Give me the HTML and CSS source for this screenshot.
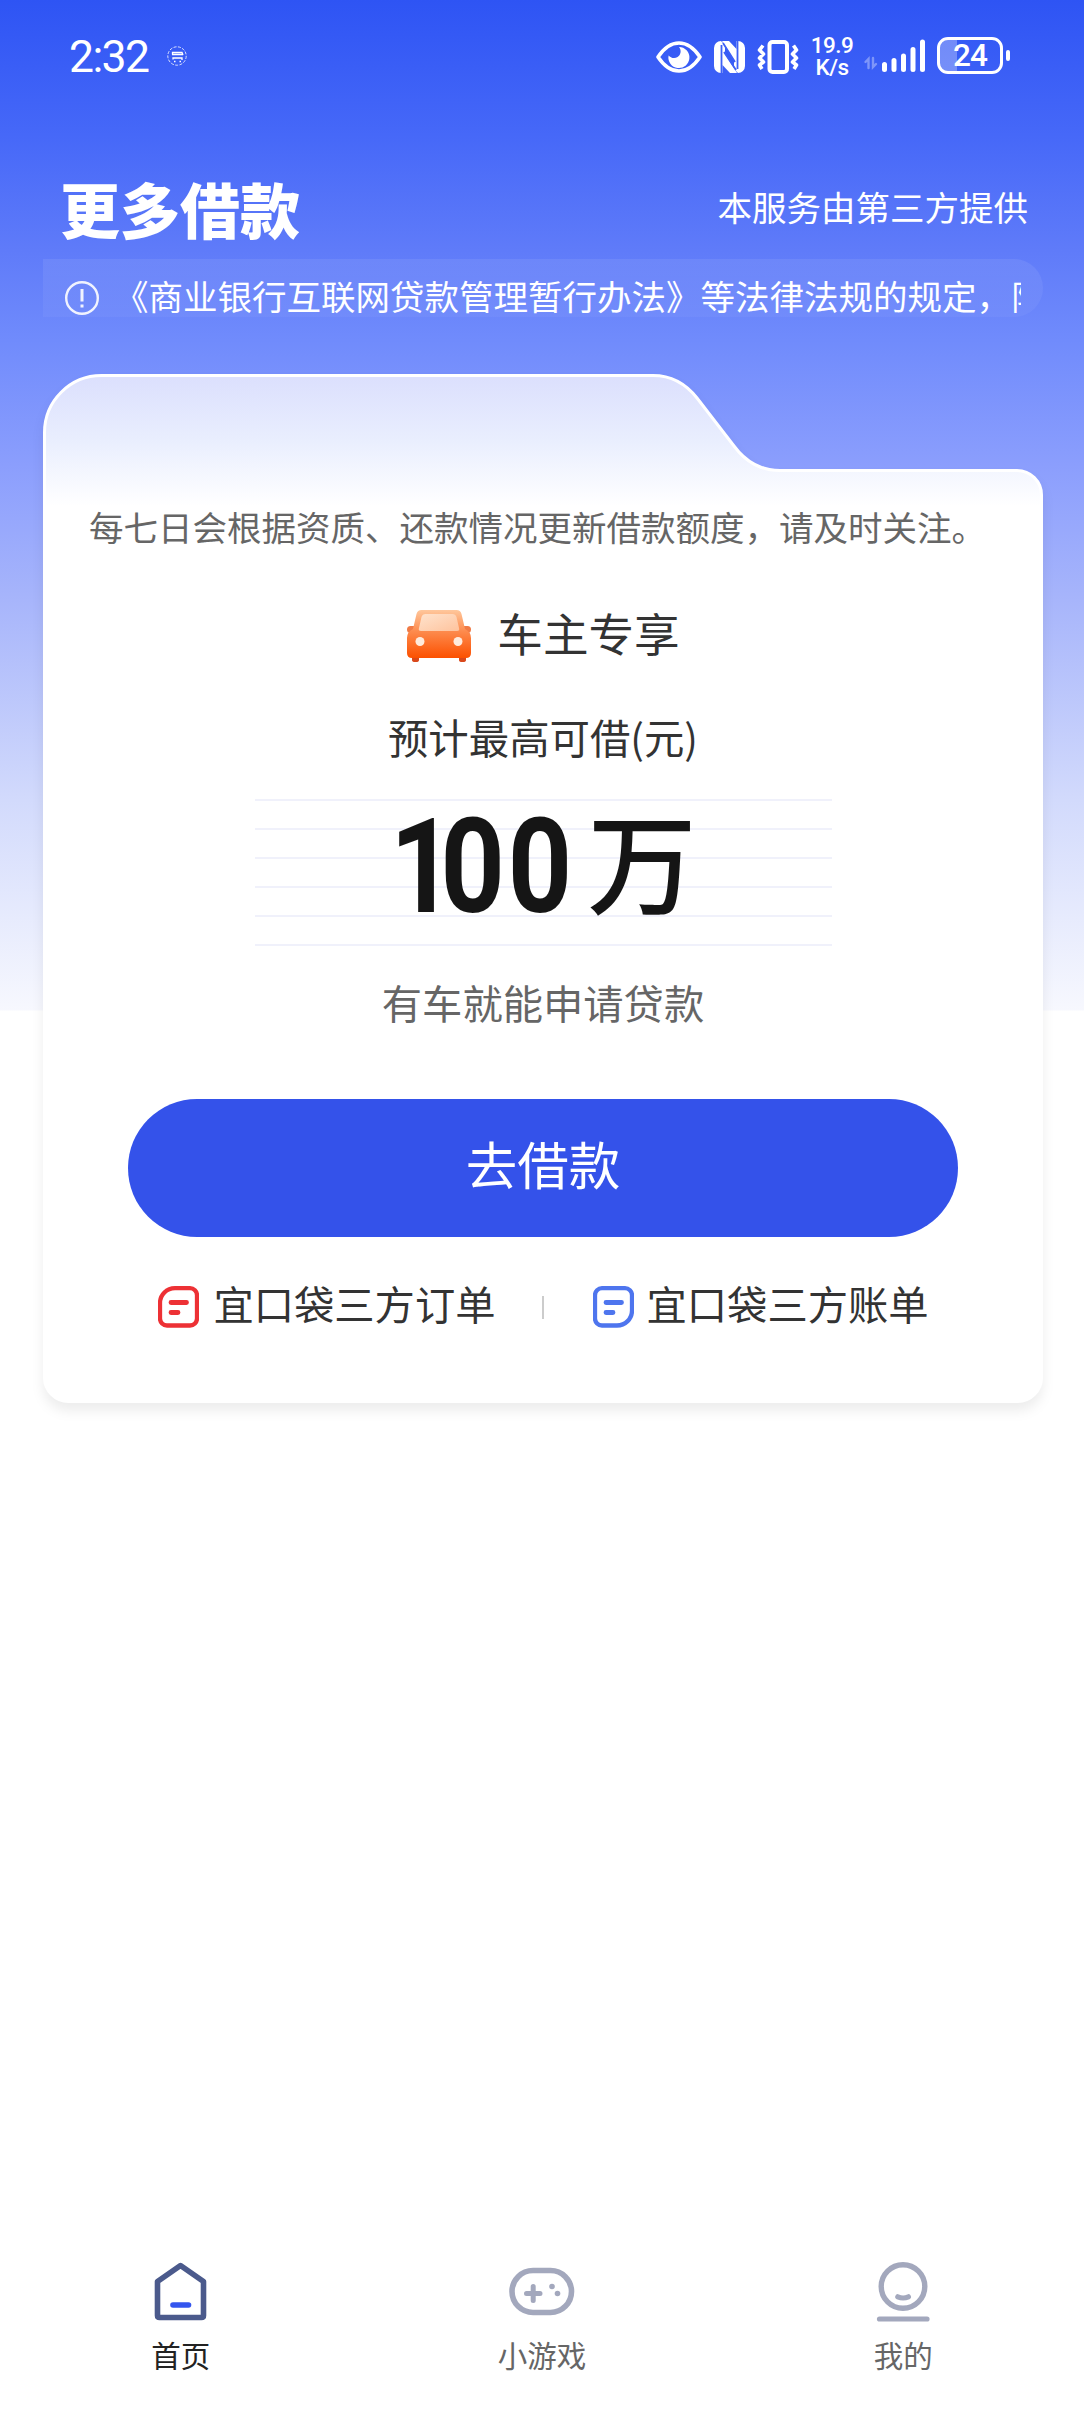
FILE: index.html
```html
<!DOCTYPE html>
<html lang="zh-CN">
<head>
<meta charset="utf-8">
<title>更多借款</title>
<link rel="stylesheet" href="styles.css">
</head>
<body>
<div class="page">
  <div class="status">
    <span class="time">2:32</span>
    <svg class="status-app" width="20" height="20" viewBox="0 0 20 20" fill="none" stroke="#fff">
      <circle cx="10" cy="10" r="9.2" stroke-width="1" stroke-dasharray="3 1.4" opacity=".8"/>
      <path d="M5.500 8.500V6.500h9.500l1 2.500M5 8.500h11M6 13.500v-1.500h9v2M7 15.500h1.500M12.500 15.500h1.500" stroke-width="1.300"/>
    </svg>
    <div class="status-right">
      <svg class="i-eye" width="46" height="32" viewBox="0 0 46 32">
        <path d="M2 16C8 7 15 2 23 2s15 5 21 14c-6 9-13 14-21 14S8 25 2 16Z" fill="none" stroke="#fff" stroke-width="3.600" stroke-linejoin="round"/>
        <path d="M23 6a10.500 10.500 0 1 1-10.400 8.500c2 2.500 6 3.500 9 1.500 3.500-2.300 4-7 1.400-10Z" fill="#fff"/>
      </svg>
      <svg class="i-nfc" width="31" height="32" viewBox="0 0 31 32" fill="#fff">
        <path d="M7 0 11 4V13L23 32H16L8.500 24V32H7a7 7 0 0 1-7-7V7A7 7 0 0 1 7 0Z"/>
        <path d="M24 32 20 28V19L8 0h7l7.500 8V0H24a7 7 0 0 1 7 7V25a7 7 0 0 1-7 7Z"/>
        <path d="M7.500 4v28M23.500 0v28M10 11l12 18M9 2l12 19" stroke="#3d60f6" stroke-width="1.800" fill="none"/>
      </svg>
      <svg class="i-vib" width="42" height="34" viewBox="0 0 42 34" fill="none" stroke="#fff">
        <rect x="12.500" y="2" width="17.500" height="30" rx="3" stroke-width="4"/>
        <path d="M6 5.500 2.500 10l4 4-4 4 4 4-4 3 2.500 4M36.500 5.500l3 4.500-4 4 4 4-4 4 4 3-2.500 4" stroke-width="3.600" stroke-linejoin="round"/>
      </svg>
      <div class="speed"><span>19.9</span><span>K/s</span></div>
      <svg class="i-signal" width="62" height="34" viewBox="0 0 62 34" fill="none" stroke="#fff" stroke-linecap="round">
        <path d="M5.500 29V20l-3 3M10 19v9l3-3" stroke-width="2.400" opacity=".35"/>
        <path d="M21.500 25.500v5M31 21.500v9M40.500 17v13.500M50 10.500v20M59.500 3v27.500" stroke-width="5"/>
      </svg>
      <div class="battery"><span>24</span></div>
      <i class="battery-nub"></i>
    </div>
  </div>

  <header class="head">
    <h1>更多借款</h1>
    <span class="provider">本服务由第三方提供</span>
  </header>

  <div class="notice">
    <svg width="36" height="36" viewBox="0 0 36 36" fill="none" stroke="#fff" opacity=".9">
      <circle cx="18" cy="18" r="15.800" stroke-width="2.400"/>
      <path d="M18 9v12.500M18 24.500v3" stroke-width="3"/>
    </svg>
    <p>《商业银行互联网贷款管理暂行办法》等法律法规的规定&#65292;限</p>
  </div>

  <main class="card">
    <svg class="card-shape" width="1000" height="1029" viewBox="0 0 1000 1029">
      <defs>
        <linearGradient id="tab" x1="0" y1="0" x2="0" y2="132" gradientUnits="userSpaceOnUse">
          <stop offset="0" stop-color="#dbdffd"/><stop offset=".5" stop-color="#e9eefe"/><stop offset="1" stop-color="#fff"/>
        </linearGradient>
      </defs>
      <path d="M1.500 58.500A57 57 0 0 1 58.500 1.500H610C629 1.500 643 10 654 24L691 72C702 87 718 96.500 737 96.500H974a24.500 24.500 0 0 1 24.500 24.500V1003.500a24 24 0 0 1-24 24H25.500a24 24 0 0 1-24-24Z" fill="url(#tab)" stroke="#fff" stroke-width="3"/>
    </svg>
    <p class="tip">每七日会根据资质、还款情况更新借款额度&#65292;请及时关注。</p>
    <div class="product">
      <svg width="66" height="54" viewBox="0 0 66 54">
        <defs>
          <linearGradient id="car" x1="0" y1="0" x2="0" y2="1"><stop offset="0" stop-color="#ffc79c"/><stop offset=".45" stop-color="#fd8a4c"/><stop offset="1" stop-color="#fc5000"/></linearGradient>
          <linearGradient id="glass" x1="0" y1="0" x2="1" y2="1"><stop offset="0" stop-color="#ffe3cd"/><stop offset="1" stop-color="#fec39d"/></linearGradient>
        </defs>
        <path d="M6 46h7v5q0 2-3 2H9q-3 0-3-2ZM53 46h7v5q0 2-3 2h-1q-3 0-3-2Z" fill="#d9481b"/>
        <rect x="1" y="17" width="10" height="7" rx="3.500" fill="#f07a45"/><rect x="55" y="17" width="10" height="7" rx="3.500" fill="#f07a45"/>
        <path d="M15.500 1h35q4 0 5 4l3.500 15q6 3 6 9v15q0 5-5 5H6q-5 0-5-5V29q0-6 6-9L10.500 5q1-4 5-4Z" fill="url(#car)"/>
        <path d="M19.500 5h27q3 0 4 3l2.500 11q1 3-2 3H15q-3 0-2-3l2.500-11q1-3 4-3Z" fill="url(#glass)"/>
        <circle cx="14" cy="32.500" r="4.500" fill="#ffebdc"/><circle cx="52" cy="32.500" r="4.500" fill="#ffebdc"/>
      </svg>
      <h2>车主专享</h2>
    </div>
    <p class="estimate">预计最高可借(元)</p>
    <div class="amount"><span class="num"><span class="one">1</span>00</span><span class="unit">万</span></div>
    <p class="desc">有车就能申请贷款</p>
    <button class="go" type="button">去借款</button>
    <div class="links">
      <a class="link"><svg width="41" height="42" viewBox="0 0 41 42" fill="none" stroke="#ed3135" stroke-linecap="round">
        <path d="M17 2.200H32a7 7 0 0 1 7 7V32.500a7 7 0 0 1-7 7H9a7 7 0 0 1-7-7V17.200a15 15 0 0 1 15-15Z" stroke-width="4.300"/>
        <path d="M13 16.500H28.500M13 26.500h7" stroke-width="4.800"/></svg><span>宜口袋三方订单</span></a>
      <i class="split"></i>
      <a class="link"><svg width="41" height="42" viewBox="0 0 41 42" fill="none" stroke="#4e75ee" stroke-linecap="round">
        <path d="M9 2.200H32a7 7 0 0 1 7 7V24.500a15 15 0 0 1-15 15H9a7 7 0 0 1-7-7V9.200a7 7 0 0 1 7-7Z" stroke-width="4.300"/>
        <path d="M13 16.500H28.500M13 26.500h7" stroke-width="4.800"/></svg><span>宜口袋三方账单</span></a>
    </div>
  </main>

  <nav class="nav">
    <a class="nav-item active">
      <svg width="66" height="62" viewBox="0 0 66 62" fill="none" stroke-linecap="round" stroke-linejoin="round">
        <path d="M32.500 4.500 55.500 20.500V54.500q0 2-2 2H11.500q-2 0-2-2V20.500Z" stroke="#4b5a8c" stroke-width="5.600"/>
        <path d="M25 44H40.500" stroke="#3455ee" stroke-width="5.600"/></svg>
      <span>首页</span></a>
    <a class="nav-item">
      <svg width="66" height="62" viewBox="0 0 66 62" fill="none" stroke="#a3a8bd" stroke-linecap="round">
        <rect x="3" y="9.500" width="59.500" height="42" rx="21" stroke-width="5.600"/>
        <path d="M17.500 32.500H31M24.200 25.500v14" stroke-width="5"/>
        <circle cx="43" cy="25.500" r="2.800" fill="#a3a8bd" stroke="none"/><circle cx="48.500" cy="32.500" r="2.800" fill="#a3a8bd" stroke="none"/></svg>
      <span>小游戏</span></a>
    <a class="nav-item">
      <svg width="66" height="62" viewBox="0 0 66 62" fill="none" stroke="#a3a8bd" stroke-linecap="round">
        <circle cx="33" cy="25.500" r="21.800" stroke-width="5.400"/>
        <path d="M27.800 35.800q5.300 2.400 10.600 0" stroke-width="5.200"/>
        <path d="M9.500 58h47.500" stroke-width="5.200"/></svg>
      <span>我的</span></a>
  </nav>
</div>
</body>
</html>
```

FILE: styles.css
```css
* { box-sizing: border-box; margin: 0; padding: 0; }
body {
  font-family: "Noto Sans CJK SC", sans-serif;
  background: #fff;
  color: #333;
}
svg { display: block; flex: none; }
.page {
  display: flex;
  flex-direction: column;
  width: 1084px;
  height: 2412px;
  overflow: hidden;
  background: linear-gradient(#2e54f4 0, #4668f8 135px, #5f7bf9 250px, #708bfc 340px, #8b9efd 465px, #a6b4fb 595px, #d2dafc 800px, #f7f8fe 1010px, #fff 1011px) no-repeat;
}

.status {
  display: flex;
  align-items: flex-start;
  height: 112px;
  padding: 37px 74px 0 69px;
  color: #fff;
  font-family: Roboto, sans-serif;
}
.time { width: 98px; font-size: 44.5px; line-height: 41px; letter-spacing: -1.6px; white-space: nowrap; }
.status-app { margin-top: 9px; }
.status-right { display: flex; margin-left: auto; }
.i-eye { margin-top: 4px; }
.i-nfc { margin: 4px 0 0 12px; }
.i-vib { margin: 3px 0 0 12px; }
.speed {
  display: flex;
  flex-direction: column;
  align-items: center;
  width: 42px;
  margin-left: 12px;
  font-size: 22.500px;
  font-weight: 500;
  line-height: 22px;
  letter-spacing: -.5px;
  white-space: nowrap;
}
.speed span:first-child { margin-top: -3px; }
.i-signal { margin: 2px 0 0 10px; }
.battery {
  width: 66px;
  height: 37px;
  margin-left: 12px;
  border: 3px solid #fff;
  border-radius: 11px;
  background: linear-gradient(90deg, rgba(255,255,255,.3) 17px, transparent 17px);
  font-size: 31.5px;
  font-weight: 500;
  line-height: 32px;
  letter-spacing: -.8px;
  text-align: center;
}
.battery-nub { width: 4px; height: 11px; margin: 13px 0 0 3px; border-radius: 2px; background: #fff; }

.head {
  display: flex;
  align-items: center;
  justify-content: space-between;
  height: 70px;
  margin-top: 61px;
  padding: 0 56px 0 60px;
  color: #fff;
}
.head h1 { font-size: 60px; line-height: 70px; font-weight: 900; }
.provider { margin-bottom: 5px; font-size: 34.5px; line-height: 40px; }
.notice {
  display: flex;
  align-items: flex-start;
  height: 58px;
  margin: 16px 41px 0 43px;
  padding: 16px 22px 0 21px;
  border-radius: 0 29px 29px 0;
  background: linear-gradient(rgba(255,255,255,.08), rgba(255,255,255,.04));
  color: #fff;
}
.notice svg { margin-top: 5px; }
.notice p {
  flex: 1;
  margin-left: 14px;
  overflow: hidden;
  font-size: 34.5px;
  line-height: 40px;
  white-space: nowrap;
}

.card {
  position: relative;
  display: flex;
  flex-direction: column;
  align-items: center;
  flex: none;
  width: 1000px;
  height: 1029px;
  margin: 57px 0 0 43px;
  padding-top: 132px;
}
.card-shape { position: absolute; inset: 0; z-index: 0; filter: drop-shadow(0 8px 6px rgba(0,0,0,.07)); }
.card > :not(.card-shape) { position: relative; }
.tip { align-self: flex-start; margin-left: 46px; font-size: 34.5px; line-height: 40px; color: #666; white-space: nowrap; }
.product { display: flex; align-items: center; gap: 25px; height: 60px; margin-top: 60px; }
.product h2 { margin-bottom: 8px; font-size: 45.6px; line-height: 52px; font-weight: 400; }
.estimate { margin-top: 46px; font-size: 40.4px; line-height: 50px; }
.amount {
  display: flex;
  width: 577px;
  height: 149px;
  margin-top: 37px;
  padding-left: 135px;
  background: repeating-linear-gradient(#f0f1fb 0 2px, transparent 2px 29px);
  color: #151515;
}
.num {
  width: 176px;
  font-family: Roboto, sans-serif;
  font-size: 132px;
  font-weight: 700;
  line-height: 136px;
  letter-spacing: 3.4px;
  white-space: nowrap;
  transform: scaleX(.85);
  transform-origin: left;
}
.one { margin-right: -19.7px; }
.unit { margin-left: 22px; font-size: 109px; font-weight: 500; line-height: 119px; }
.desc { margin-top: 29px; font-size: 40.3px; line-height: 50px; color: #666; }
.go {
  flex: none;
  width: 830px;
  height: 138px;
  margin-top: 72px;
  padding-bottom: 11px;
  border: 0;
  border-radius: 69px;
  background: #3452ea;
  color: #fff;
  font: 400 51.500px/60px "Noto Sans CJK SC", sans-serif;
}
.links { display: flex; align-items: center; height: 48px; margin-top: 46px; }
.link { display: flex; align-items: center; gap: 14px; }
.link span { margin-bottom: 8px; font-size: 40.3px; line-height: 48px; }
.split { width: 2px; height: 23px; margin: 0 49px 0 46px; background: #ccc; }
.link:first-child { margin-left: 1px; }
.link:last-child { gap: 13px; }

.nav { display: grid; grid-template-columns: repeat(3, 1fr); height: 151px; margin-top: auto; }
.nav-item { display: flex; flex-direction: column; align-items: center; color: #666; }
.nav-item span { margin-top: 13px; font-size: 29.5px; line-height: 36px; }
.nav-item.active span { color: #222; }
```
